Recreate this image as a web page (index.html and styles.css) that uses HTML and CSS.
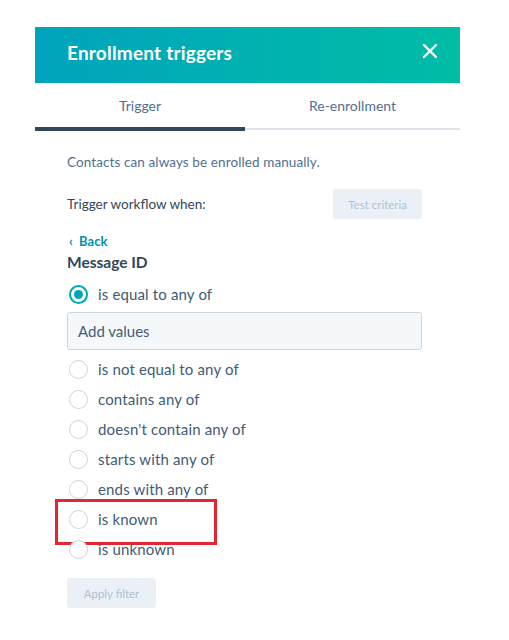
FILE: index.html
```html
<!DOCTYPE html>
<html lang="en">
<head>
    <meta charset="UTF-8">
    <title>Enrollment triggers</title>
    <link rel="stylesheet" href="styles.css">
</head>
<body>
    <div class="panel">
        <div class="panel-header">
            <h1>Enrollment triggers</h1>
            <button class="close" type="button" aria-label="Close">
                <svg width="16" height="16" viewBox="0 0 16 16">
                    <path d="M2 2 L14 14 M14 2 L2 14" stroke="#fff" stroke-width="2.4" stroke-linecap="round"/>
                </svg>
            </button>
        </div>

        <div class="tabs">
            <div class="tab active">Trigger</div>
            <div class="tab">Re-enrollment</div>
        </div>

        <div class="panel-body">
            <p class="note">Contacts can always be enrolled manually.</p>

            <div class="trigger-row">
                <span class="trigger-label">Trigger workflow when:</span>
                <button class="btn-disabled" type="button">Test criteria</button>
            </div>

            <a class="back" href="#">&lsaquo;&nbsp; Back</a>
            <h2>Message ID</h2>

            <label class="radio first">
                <span class="dot checked"></span>
                is equal to any of
            </label>
            <div class="values">Add values</div>

            <div class="options">
                <label class="radio"><span class="dot"></span>is not equal to any of</label>
                <label class="radio"><span class="dot"></span>contains any of</label>
                <label class="radio"><span class="dot"></span>doesn't contain any of</label>
                <label class="radio"><span class="dot"></span>starts with any of</label>
                <label class="radio"><span class="dot"></span>ends with any of</label>
                <label class="radio highlighted"><span class="dot"></span>is known</label>
                <label class="radio"><span class="dot"></span>is unknown</label>
            </div>

            <button class="btn-disabled apply" type="button">Apply filter</button>
        </div>
    </div>
</body>
</html>
```

FILE: styles.css
```css
* {
    margin: 0;
    padding: 0;
    box-sizing: border-box;
}
body {
    background-color: #fff;
    font-family: 'Lato', 'Open Sans', sans-serif;
    color: #33475b;
}
.panel {
    width: 425px;
    margin: 27px 0 0 35px;
}
.panel-header {
    height: 56px;
    display: flex;
    align-items: center;
    justify-content: space-between;
    padding: 0 22px 0 32px;
    background: linear-gradient(to right, #00a4bd, #00bda5);
}
.panel-header h1 {
    font-size: 19px;
    font-weight: 700;
    color: #fff;
    letter-spacing: 0.2px;
    margin-top: -6px;
}
.close {
    background: none;
    border: none;
    width: 16px;
    height: 16px;
    margin-top: -8px;
}

/* Pestañas */
.tabs {
    display: flex;
    align-items: flex-start;
}
.tab {
    flex: 1;
    height: 47px;
    display: flex;
    align-items: center;
    justify-content: center;
    padding-bottom: 1px;
    font-size: 14px;
    color: #516f90;
    border-bottom: 2px solid #dfe3eb;
}
.tab.active {
    flex: 0 0 210px;
    height: 48px;
    border-bottom: 4px solid #33475b;
    padding-bottom: 0;
}

.panel-body {
    padding: 21px 38px 0 32px;
}
.note {
    font-size: 13.5px;
    line-height: 20px;
    letter-spacing: 0.1px;
    color: #516f90;
}
.trigger-row {
    display: flex;
    align-items: center;
    justify-content: space-between;
    margin-top: 17px;
}
.trigger-label {
    font-size: 13.5px;
    color: #33475b;
}
.btn-disabled {
    height: 30px;
    padding: 0 15px;
    border: none;
    border-radius: 3px;
    background-color: #eaf0f6;
    color: #b0c1d4;
    font-family: inherit;
    font-size: 11.5px;
}
.back {
    display: block;
    margin-top: 12px;
    line-height: 20px;
    font-size: 13px;
    font-weight: 700;
    color: #0091ae;
    text-decoration: none;
    padding-left: 2px;
}
h2 {
    font-size: 15.5px;
    font-weight: 700;
    line-height: 22px;
    color: #33475b;
}
.radio {
    position: relative;
    display: flex;
    align-items: center;
    height: 30px;
    font-size: 15px;
    letter-spacing: 0.15px;
    color: #425b76;
    padding-left: 2px;
}
.radio.first {
    margin-top: 6px;
}
.dot {
    width: 19px;
    height: 19px;
    margin-right: 10px;
    border: 1px solid #cbd6e2;
    border-radius: 50%;
    background-color: #fff;
    display: flex;
    align-items: center;
    justify-content: center;
}
.dot.checked {
    border: 2px solid #00a4bd;
}
.dot.checked::after {
    content: "";
    width: 9px;
    height: 9px;
    border-radius: 50%;
    background-color: #00a4bd;
}
.values {
    margin-top: 3px;
    height: 38px;
    display: flex;
    align-items: center;
    padding-left: 10px;
    background-color: #f5f8fa;
    border: 1px solid #cbd6e2;
    border-radius: 3px;
    font-size: 15px;
    color: #425b76;
}
.options {
    margin-top: 4px;
}
.highlighted::before {
    content: "";
    position: absolute;
    left: -12px;
    top: -5px;
    width: 156px;
    height: 40px;
    border: 3px solid #e3262f;
}
.apply {
    margin-top: 14px;
    width: 89px;
    padding: 0;
}
```
